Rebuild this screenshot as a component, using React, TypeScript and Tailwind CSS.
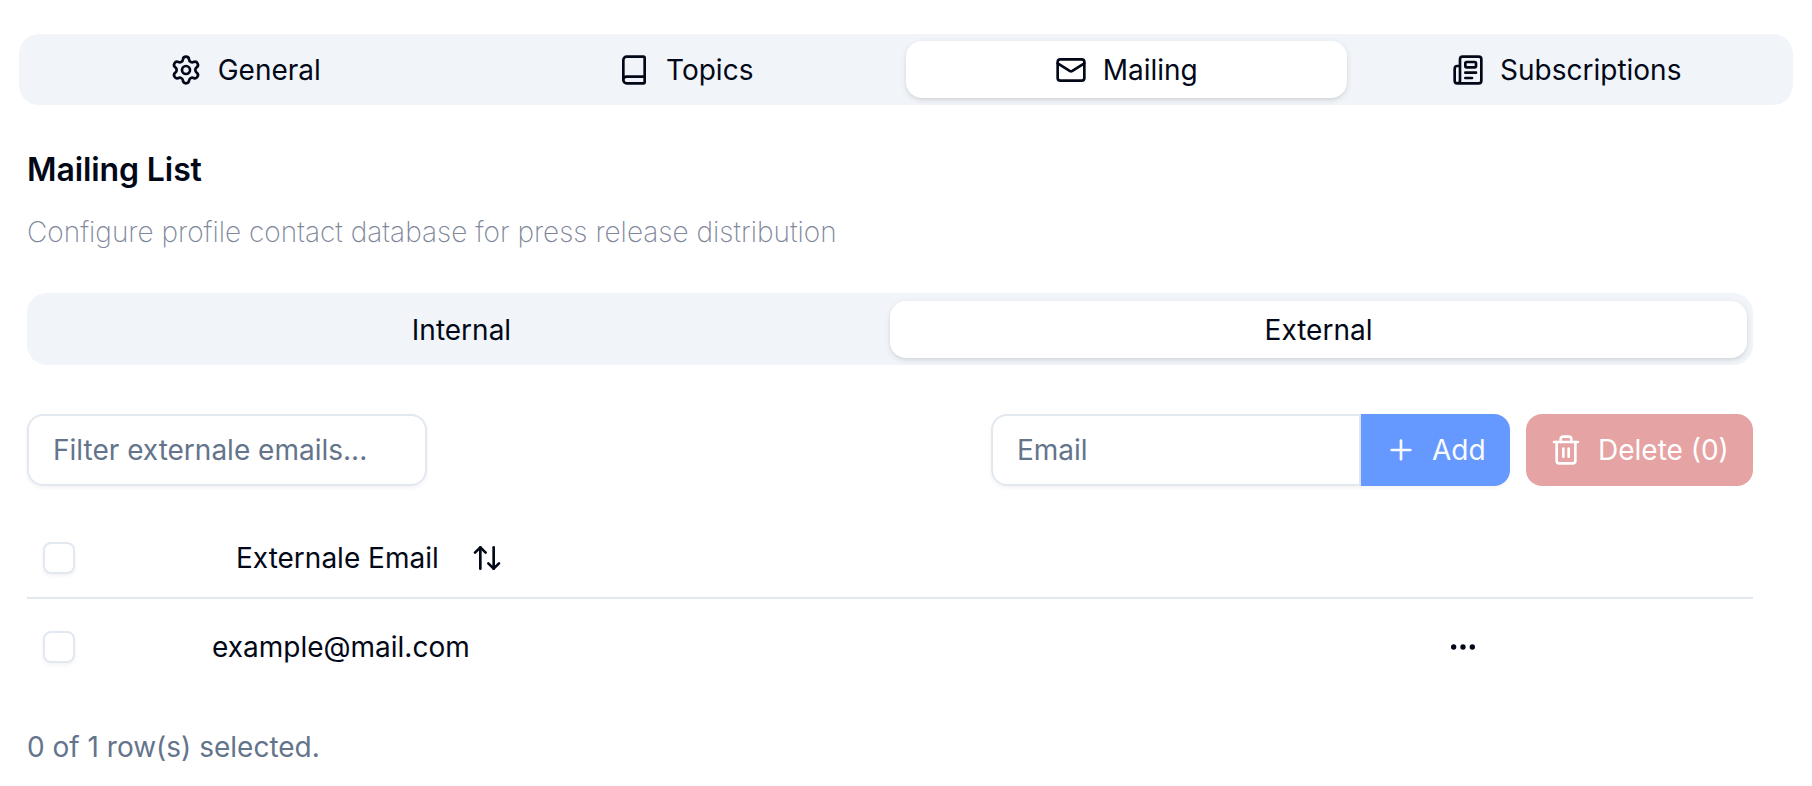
import { ArrowUpDown, Book, Mail, MoreHorizontal, Newspaper, Plus, Settings, Trash2 } from "lucide-react";

const tabs = [
  { label: "General", Icon: Settings },
  { label: "Topics", Icon: Book },
  { label: "Mailing", Icon: Mail, active: true },
  { label: "Subscriptions", Icon: Newspaper },
];

function Checkbox() {
  return (
    <button
      role="checkbox"
      aria-checked={false}
      className="block size-8 rounded-lg border-2 border-[#e2e8f0] bg-white shadow-[0_2px_4px_0_rgba(0,0,0,0.05)]"
    />
  );
}

export default function App() {
  return (
    <div className="h-[786px] w-full bg-white pl-[19px] pr-[19px] pt-[34px] font-['Inter',sans-serif] text-[28px] leading-10 text-[#020817]">
      <div className="grid h-[71px] grid-cols-4 rounded-[20px] bg-[#f1f5fa] px-[6px] py-[7px]">
        {tabs.map(({ label, Icon, active }) => (
          <button
            key={label}
            className={
              active
                ? "flex items-center justify-center gap-4 rounded-2xl bg-white shadow-[0_2px_6px_0_rgba(0,0,0,0.1),0_2px_4px_-2px_rgba(0,0,0,0.1)]"
                : "flex items-center justify-center gap-4 rounded-2xl"
            }
          >
            <Icon size={32} />
            <span>{label}</span>
          </button>
        ))}
      </div>

      <main className="pl-2 pr-10">
        <h3 className="mt-[45px] text-[32px] font-semibold leading-10 tracking-[-0.1px]">Mailing List</h3>
        <p className="mt-[22px] font-extralight text-[#7f889b]">
          Configure profile contact database for press release distribution
        </p>

        <div className="mt-[41px] grid h-[72px] grid-cols-2 rounded-[20px] bg-[#f1f5fa] px-[6px] pb-[7px] pt-2">
          <button className="rounded-2xl">Internal</button>
          <button className="rounded-2xl bg-white shadow-[0_2px_6px_0_rgba(0,0,0,0.1),0_2px_4px_-2px_rgba(0,0,0,0.1)]">
            External
          </button>
        </div>

        <div className="mt-[48.5px] flex h-[72px] items-stretch justify-between">
          <input
            placeholder="Filter externale emails..."
            className="w-[400px] rounded-2xl border-2 border-[#e2e8f0] px-6 shadow-[0_2px_4px_0_rgba(0,0,0,0.05)] placeholder:text-[#64748b]"
          />
          <div className="flex">
            <input
              placeholder="Email"
              className="w-[370px] rounded-l-2xl border-2 border-[#e2e8f0] px-6 shadow-[0_2px_4px_0_rgba(0,0,0,0.05)] placeholder:text-[#64748b]"
            />
            <button className="flex w-[149px] items-center rounded-r-2xl bg-[#6699ff] pl-6 text-[#f8fafc] shadow-[0_2px_4px_0_rgba(0,0,0,0.05)]">
              <Plus size={32} />
              <span className="ml-[15px]">Add</span>
            </button>
            <button className="ml-4 flex w-[227px] items-center rounded-2xl bg-[#e5a3a3] pl-6 text-white">
              <Trash2 size={32} />
              <span className="ml-4 whitespace-nowrap">Delete (0)</span>
            </button>
          </div>
        </div>

        <div className="mt-8 flex h-[81.5px] items-center border-b-2 border-[#e2e8f0] pl-4 pt-px">
          <Checkbox />
          <div className="ml-[161px] flex items-center">
            <span>Externale Email</span>
            <ArrowUpDown size={32} className="ml-8" />
          </div>
        </div>
        <div className="flex h-[96px] items-center pb-px pl-4">
          <Checkbox />
          <span className="ml-[137px] w-[1235px]">example@mail.com</span>
          <MoreHorizontal size={32} />
        </div>

        <p className="mt-8 text-[#64748b]">0 of 1 row(s) selected.</p>
      </main>
    </div>
  );
}
